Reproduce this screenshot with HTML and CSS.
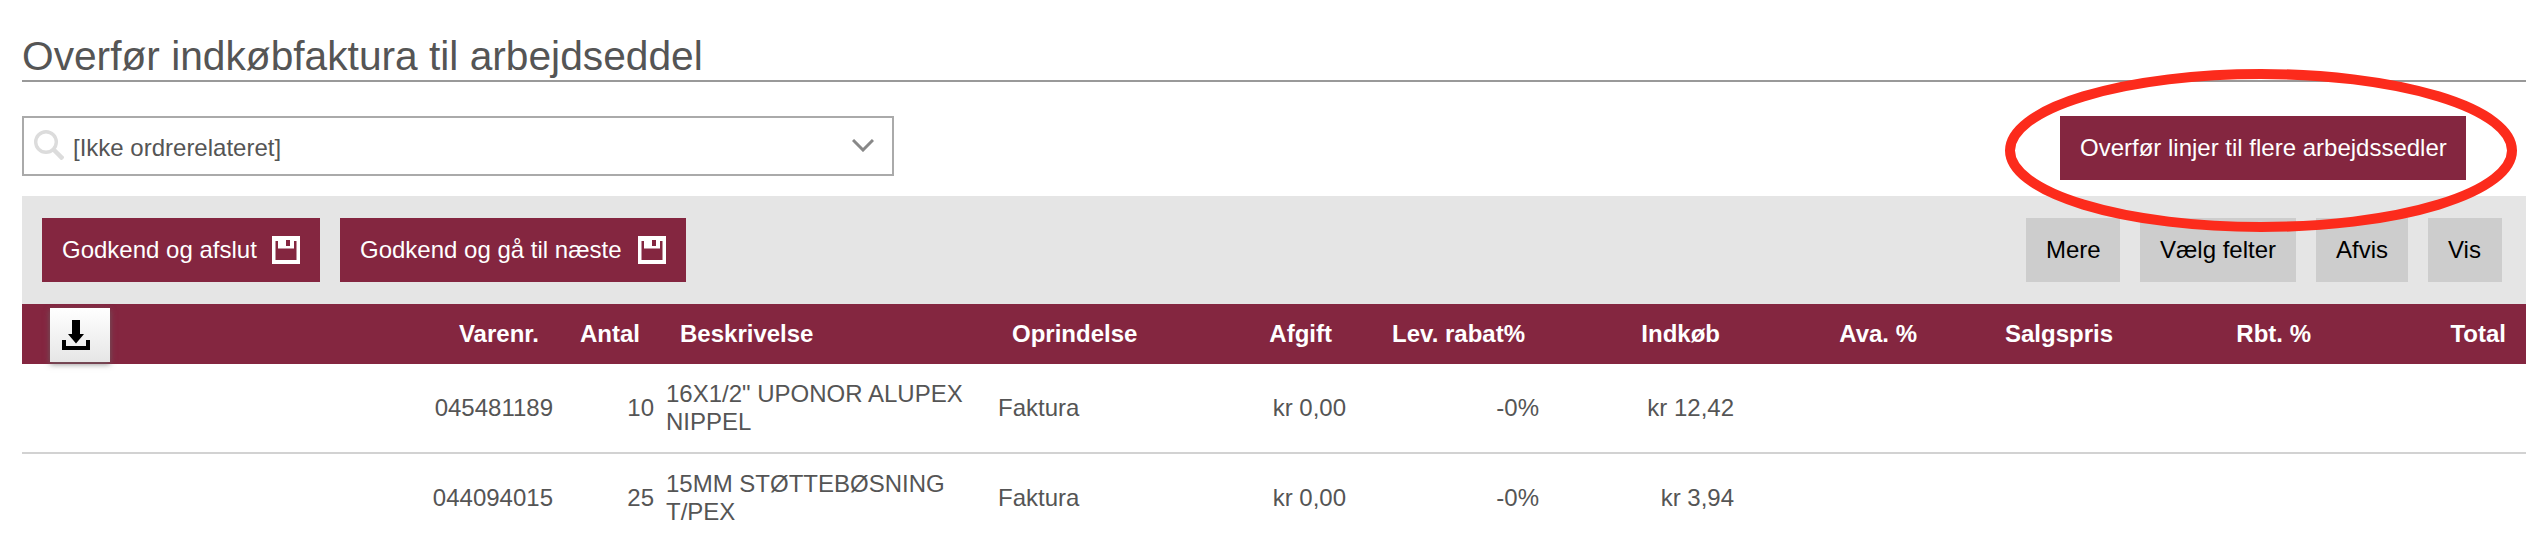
FILE: index.html
```html
<!DOCTYPE html>
<html lang="da">
<head>
<meta charset="utf-8">
<title>Overfør indkøbfaktura til arbejdseddel</title>
<link rel="stylesheet" href="styles.css">
</head>
<body>
<main class="page">
  <h1 class="title">Overfør indkøbfaktura til arbejdseddel</h1>
  <div class="filters">
    <div class="select">
      <svg class="search" viewBox="0 0 30 30" width="30" height="30"><circle cx="12" cy="12" r="10.300" fill="none" stroke="#dcdcdc" stroke-width="3.400"/><path d="M19 19L29 29" stroke="#dcdcdc" stroke-width="4.500"/></svg>
      <span class="value">[Ikke ordrerelateret]</span>
      <svg class="chevron" viewBox="0 0 22 13" width="22" height="13"><path d="M1 1L11 11L21 1" fill="none" stroke="#888" stroke-width="3"/></svg>
    </div>
    <div class="highlight">
      <button class="btn primary wide">Overfør linjer til flere arbejdssedler</button>
      <svg class="ring" viewBox="0 0 512 163" width="512" height="163"><ellipse cx="256" cy="81.500" rx="251" ry="76.500" fill="none" stroke="#fc2b1c" stroke-width="10"/></svg>
    </div>
  </div>
  <div class="toolbar">
    <button class="btn primary b1">Godkend og afslut
      <svg class="disk" viewBox="0 0 28 28" width="28" height="28"><path class="disk-body" d="M0 0H28V28H0Z"/><path class="disk-cut" d="M3.500 5H6V12.500H22V5H24.500V24H3.500ZM14 4H18V10H14Z"/></svg></button>
    <button class="btn primary b2">Godkend og gå til næste
      <svg class="disk" viewBox="0 0 28 28" width="28" height="28"><path class="disk-body" d="M0 0H28V28H0Z"/><path class="disk-cut" d="M3.500 5H6V12.500H22V5H24.500V24H3.500ZM14 4H18V10H14Z"/></svg></button>
    <div class="secondary">
      <button class="btn gray g1">Mere</button>
      <button class="btn gray g2">Vælg felter</button>
      <button class="btn gray g3">Afvis</button>
      <button class="btn gray g4">Vis</button>
    </div>
  </div>
  <table class="lines">
    <colgroup><col class="c0"><col class="c1"><col class="c2"><col class="c3"><col class="c4"><col class="c5"><col class="c6"><col class="c7"><col class="c8"><col class="c9"><col class="c10"><col class="c11"></colgroup>
    <thead>
      <tr><th class="tool"><button class="download"><svg viewBox="0 0 28 30" width="28" height="30"><path d="M10 0H18V14H22L14 23.500L6 14H10ZM0 20H4V26H24V20H28V30H0Z"/></svg></button></th><th>Varenr.</th><th>Antal</th><th class="left">Beskrivelse</th><th class="left">Oprindelse</th><th>Afgift</th><th>Lev. rabat%</th><th>Indkøb</th><th>Ava. %</th><th>Salgspris</th><th>Rbt. %</th><th>Total</th></tr>
    </thead>
    <tbody>
      <tr><td></td><td>045481189</td><td>10</td><td class="left">16X1/2" UPONOR ALUPEX NIPPEL</td><td class="left">Faktura</td><td>kr 0,00</td><td>-0%</td><td>kr 12,42</td><td></td><td></td><td></td><td></td></tr>
      <tr><td></td><td>044094015</td><td>25</td><td class="left">15MM STØTTEBØSNING T/PEX</td><td class="left">Faktura</td><td>kr 0,00</td><td>-0%</td><td>kr 3,94</td><td></td><td></td><td></td><td></td></tr>
    </tbody>
  </table>
</main>
</body>
</html>
```
FILE: styles.css
```css
* { box-sizing: border-box; }
body { margin: 0; background: #fff; color: #555; font: 24px/28px "Liberation Sans", Arial, sans-serif; overflow: hidden; }
.page { padding: 30px 18px 0 22px; }
.title { margin: 0; height: 52px; border-bottom: 2px solid #999; font-size: 40.7px; font-weight: 400; line-height: 52px; }
.filters { display: flex; justify-content: space-between; align-items: flex-start; padding: 34px 60px 0 0; height: 114px; }
.select { display: flex; align-items: center; width: 872px; height: 60px; border: 2px solid #aaa; padding: 0 18px 0 10px; }
.value { flex: 1; margin-left: 9px; padding-top: 4px; }
.search { margin-top: -2px; }
.chevron { margin-top: -2px; }
.highlight { position: relative; }
.ring { position: absolute; left: -55px; top: -47px; pointer-events: none; }
.btn { display: flex; align-items: center; border: 0; height: 64px; padding: 0 20px; font: inherit; white-space: nowrap; }
.primary { background: #842640; color: #fff; }
.wide { width: 406px; }
.b1 { width: 278px; }
.b2 { width: 346px; }
.disk { margin-left: auto; }
.disk-body { fill: #fff; }
.disk-cut { fill: #842640; }
.gray { background: #cdcdcd; color: #000; }
.g1 { width: 94px; }
.g2 { width: 156px; }
.g3 { width: 92px; }
.g4 { width: 74px; }
.toolbar { display: flex; gap: 20px; height: 108px; padding: 22px 24px 22px 20px; background: #e5e5e5; }
.secondary { display: flex; gap: 20px; margin-left: auto; }
.lines { width: 2504px; table-layout: fixed; border-collapse: separate; border-spacing: 0; }
.lines th { height: 60px; padding: 0 20px; background: #842640; color: #fff; text-align: right; white-space: nowrap; }
.lines td { height: 90px; padding: 0 6px; border-bottom: 2px solid #d2d2d2; text-align: right; }
.lines .left { text-align: left; }
.lines .tool { padding: 2px 0 0 28px; }
.download { display: flex; width: 60px; height: 54px; padding: 12px 0 0 12px; border: 0; background: linear-gradient(#fff, #e6e6e6); box-shadow: 0 2px 6px rgba(102, 102, 102, .8); position: relative; }
.c0 { width: 334px; }
.c1 { width: 203px; }
.c2 { width: 101px; }
.c3 { width: 332px; }
.c4 { width: 200px; }
.c5 { width: 160px; }
.c6 { width: 193px; }
.c7 { width: 195px; }
.c8 { width: 197px; }
.c9 { width: 196px; }
.c10 { width: 198px; }
.c11 { width: 195px; }
```
